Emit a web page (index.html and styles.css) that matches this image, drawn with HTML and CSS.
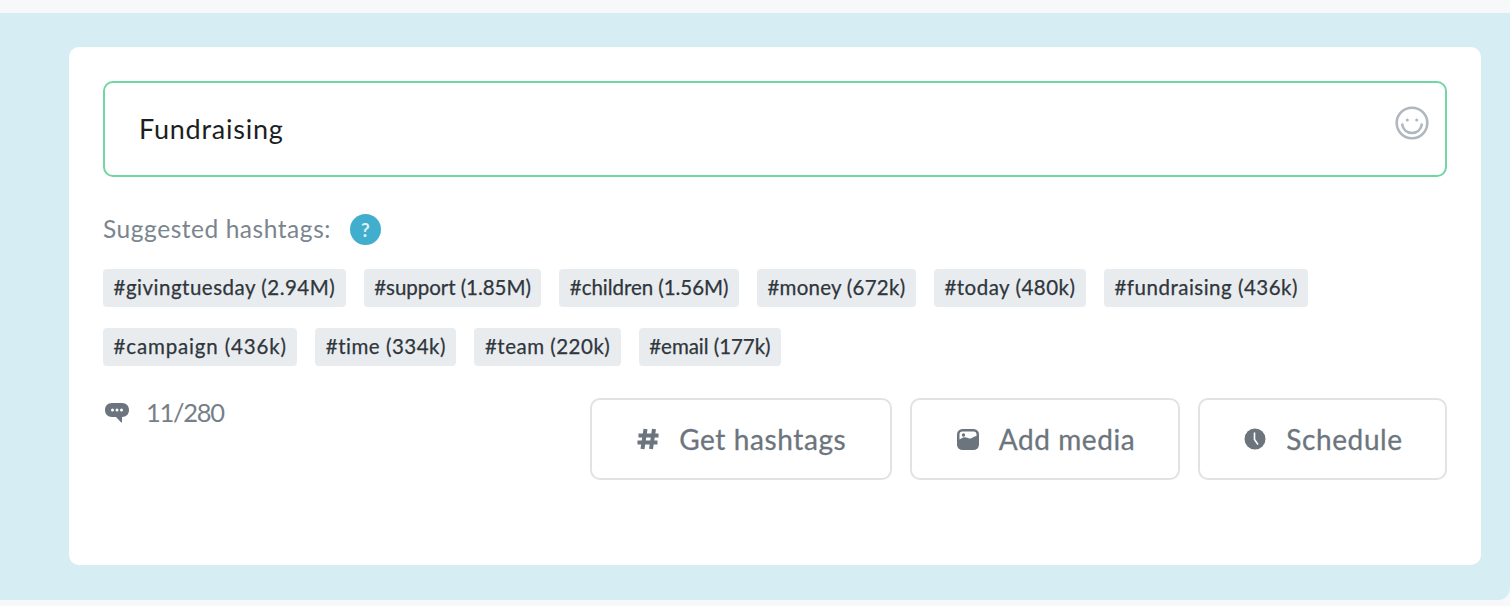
FILE: index.html
```html
<!DOCTYPE html>
<html lang="en">
<head>
  <meta charset="UTF-8" />
  <meta name="viewport" content="width=device-width, initial-scale=1" />
  <title>Compose post</title>
  <link rel="stylesheet" href="styles.css">
</head>
<body>
  <div class="band">
    <div class="card">
      <div class="post-box">
        <span class="post-text">Fundraising</span>
        <svg class="smiley" viewBox="0 0 34 34" width="34" height="34">
          <circle cx="17" cy="17" r="15.3" />
          <circle class="eye" cx="12.3" cy="14" r="1.5" />
          <circle class="eye" cx="21.7" cy="14" r="1.5" />
          <path d="M7 17.5c.8 6 5 9.500 10 9.500s9.200-3.500 10-9.500" />
        </svg>
      </div>

      <div class="suggest-row">
        <span class="suggest-label">Suggested hashtags:</span>
        <span class="help-dot">?</span>
      </div>

      <div class="tags">
        <span class="tag">#givingtuesday (2.94M)</span>
        <span class="tag tag-narrow">#support (1.85M)</span>
        <span class="tag tag-narrow">#children (1.56M)</span>
        <span class="tag tag-snug">#money (672k)</span>
        <span class="tag">#today (480k)</span>
        <span class="tag">#fundraising (436k)</span>
      </div>
      <div class="tags">
        <span class="tag tag-wide">#campaign (436k)</span>
        <span class="tag">#time (334k)</span>
        <span class="tag">#team (220k)</span>
        <span class="tag tag-narrow">#email (177k)</span>
      </div>

      <div class="bottom-row">
        <div class="counter">
          <svg viewBox="0 0 24 20" width="24" height="20">
            <path class="fill" d="M7 0h10c4.500 0 7 3 7 7s-2.500 7-7 7v5c0 .5-.5.7-1 .3L11 14H7C2.500 14 0 11 0 7s2.500-7 7-7z" />
            <circle class="dot" cx="7.500" cy="7" r="1.500" />
            <circle class="dot" cx="12" cy="7" r="1.500" />
            <circle class="dot" cx="16.500" cy="7" r="1.500" />
          </svg>
          <span class="count">11/280</span>
        </div>
        <div class="actions">
          <button class="action-btn btn-hash">
            <svg viewBox="0 0 22 22" width="22" height="22">
              <path class="stroke" d="M8.500 1 5.500 21M17 1 14 21M1.500 7.500h20M.5 14.500h20" />
            </svg>
            Get hashtags
          </button>
          <button class="action-btn btn-media">
            <svg viewBox="0 0 22 21" width="22" height="21">
              <rect class="fill" width="22" height="21" rx="5.500" />
              <path class="dot" d="M2.500 10.500v-5c0-2 1-3 3-3h11c2 0 3 1 3 3V7c-3 0-4.500 3-7 2.500S8 6.500 2.500 10.500z" />
              <circle class="fill" cx="6.500" cy="6" r="1.700" />
            </svg>
            Add media
          </button>
          <button class="action-btn btn-clock">
            <svg viewBox="0 0 22 22" width="22" height="22">
              <circle class="fill" cx="11" cy="11" r="10.500" />
              <path class="hand" d="M10.500 4.500v7l3.500 5" />
            </svg>
            Schedule
          </button>
        </div>
      </div>
    </div>
  </div>
</body>
</html>
```

FILE: styles.css
```css
* {
  box-sizing: border-box;
}
body {
  margin: 0;
  padding: 13px 0 6px;
  height: 606px;
  overflow: hidden;
  background: #f7f8fa;
  font-family: "Lato", "Liberation Sans", sans-serif;
}
.band {
  height: 587px;
  padding: 34px 29px 35px 69px;
  background: #d7edf4;
  border-bottom-right-radius: 12px;
}
.card {
  height: 518px;
  padding: 34px;
  background: #fff;
  border-radius: 10px;
}
.post-box {
  height: 96px;
  padding: 0 16px 0 34px;
  display: flex;
  align-items: center;
  justify-content: space-between;
  border: 2px solid #71d6a4;
  border-radius: 10px;
}
.post-text {
  margin-bottom: 2px;
  font-size: 27px;
  letter-spacing: 0.75px;
  color: #1c1f22;
}
.smiley {
  margin-bottom: 12px;
  fill: none;
  stroke: #b0b7bf;
  stroke-width: 2.6;
}
.smiley .eye {
  fill: #b0b7bf;
  stroke: none;
}
.suggest-row {
  margin-top: 37px;
  height: 32px;
  display: flex;
  align-items: center;
  gap: 19px;
}
.suggest-label {
  margin-bottom: 4px;
  font-size: 24.5px;
  letter-spacing: 0.55px;
  color: #7b858e;
}
.help-dot {
  width: 31px;
  height: 31px;
  margin-bottom: 1px;
  display: flex;
  align-items: center;
  justify-content: center;
  border-radius: 50%;
  background: #41aecd;
  color: #dff1f6;
  font-size: 19px;
  font-weight: 700;
}
.tags {
  margin-top: 23px;
  display: flex;
  gap: 18px;
}
.tags + .tags {
  margin-top: 21px;
}
.tag {
  height: 38px;
  padding: 0 10.5px 2px;
  display: flex;
  align-items: center;
  background: #e9ecef;
  border-radius: 4px;
  font-size: 20.5px;
  letter-spacing: 0.5px;
  color: #2f363c;
  -webkit-text-stroke: 0.25px #2f363c;
}
.tag-narrow {
  letter-spacing: -0.05px;
}
.tag-snug {
  letter-spacing: 0.25px;
}
.tag-wide {
  letter-spacing: 0.85px;
}
.bottom-row {
  margin-top: 32px;
  display: flex;
  align-items: flex-start;
  justify-content: space-between;
}
.counter {
  margin-left: 2px;
  display: flex;
  align-items: center;
  gap: 17px;
  line-height: 28px;
  font-size: 25.5px;
  letter-spacing: -1.3px;
  color: #767f88;
}
.count {
  margin-bottom: 2px;
}
.actions {
  display: flex;
  gap: 18px;
}
.action-btn {
  height: 82px;
  padding: 0 0 0 2px;
  display: flex;
  align-items: center;
  justify-content: center;
  gap: 20px;
  background: #fff;
  border: 2px solid #e0e3e6;
  border-radius: 10px;
  font-family: inherit;
  font-size: 28px;
  letter-spacing: 0.6px;
  color: #6c757d;
  -webkit-text-stroke: 0.3px #6c757d;
}
.btn-hash {
  width: 302.5px;
}
.btn-media {
  width: 270px;
}
.btn-clock {
  width: 249px;
}
.fill {
  fill: #6c757d;
}
.dot {
  fill: #fff;
}
.stroke {
  fill: none;
  stroke: #6c757d;
  stroke-width: 4;
}
.hand {
  fill: none;
  stroke: #fff;
  stroke-width: 1.6;
}
```
